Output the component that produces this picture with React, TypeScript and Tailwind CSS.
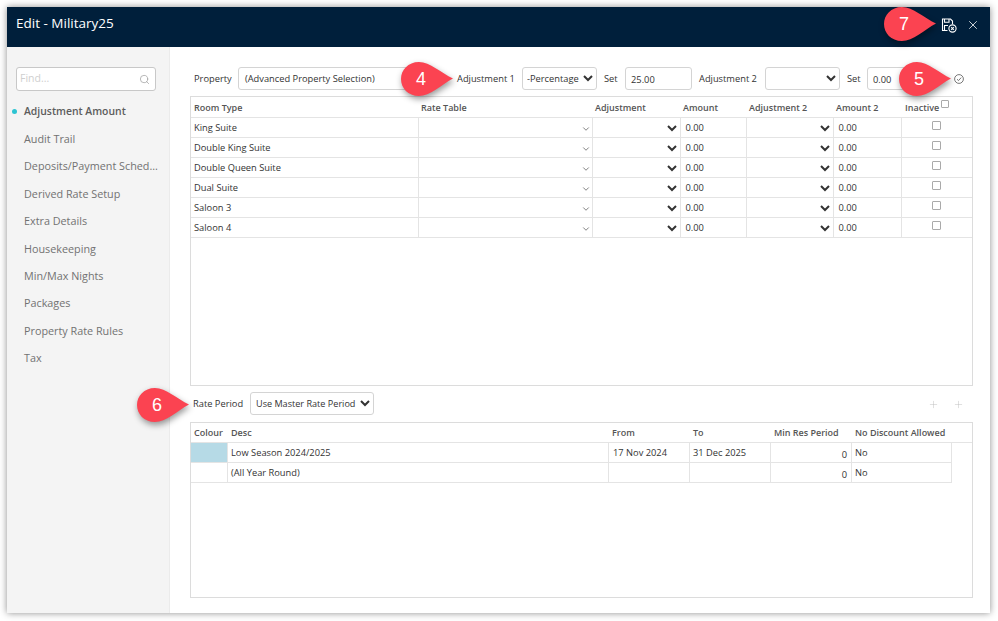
import { ChevronDown, Plus, Search, X } from "lucide-react";

const navItems = [
  "Audit Trail",
  "Deposits/Payment Sched...",
  "Derived Rate Setup",
  "Extra Details",
  "Housekeeping",
  "Min/Max Nights",
  "Packages",
  "Property Rate Rules",
  "Tax",
];

const rooms = ["King Suite", "Double King Suite", "Double Queen Suite", "Dual Suite", "Saloon 3", "Saloon 4"];

const controlClass =
  "h-[23px] rounded-[3px] border border-[#d4d4d4] bg-white text-[9.3px] text-[#333]";

const Callout = ({ n, className }: { n: number; className: string }) => (
  <div className={`absolute h-[34px] w-[52px] ${className}`}>
    <svg width="52" height="34" viewBox="0 0 52 34" className="absolute left-0 top-0 drop-shadow-[1px_3px_3px_rgba(0,0,0,0.4)]">
      <path d="M18 0C29 0 40 11 52 16.5C40 23 29 34 18 34C7 34 0 26 0 17C0 8 7 0 18 0Z" fill="#fb4351" />
    </svg>
    <span className="absolute left-[6px] top-0 w-[28px] text-center font-['Liberation_Sans',sans-serif] text-[18px] leading-[34px] text-white">
      {n}
    </span>
  </div>
);

const SaveIcon = () => (
  <svg width="16" height="15" viewBox="0 0 16 15" fill="none" stroke="#fff" strokeWidth="1.1">
    <path d="M6.5 12.5H1.5V1H9.5L11.5 3V6" />
    <path d="M3.5 1V4.2H8V1" />
    <path d="M3.5 12V7.5H7" />
    <circle cx="11.5" cy="10.5" r="3.6" />
    <path d="M10.2 9.2L12.8 11.8M12.8 9.2L10.2 11.8" />
  </svg>
);

const CheckCircle = () => (
  <svg width="10" height="10" viewBox="0 0 10 10" fill="none" stroke="#555" strokeWidth="0.8">
    <circle cx="5" cy="5" r="4.4" />
    <path d="M3 5.2L4.5 6.6L7.2 3.6" />
  </svg>
);

export default function App() {
  return (
    <div className="relative h-[621px] w-[998px] overflow-hidden bg-white pl-[7px] pt-[7px] font-['Open_Sans',sans-serif]">
      <div className="flex h-[606px] w-[983px] flex-col bg-white shadow-[0_0_7px_rgba(0,0,0,0.45)]">
        {/* Header */}
        <div className="flex h-[40px] shrink-0 items-center bg-[#001f3b] pl-[9px] pr-[10px] text-white">
          <span className="pb-[8px] text-[13.5px]">Edit - Military25</span>
          <div className="ml-auto flex items-center gap-[9px] pb-[4px]">
            <SaveIcon />
            <X size={14} strokeWidth={1.5} className="text-[#e6e9ec]" />
          </div>
        </div>

        <div className="flex min-h-0 flex-1">
          {/* Sidebar */}
          <div className="w-[163px] shrink-0 border-r border-[#ebebeb] bg-[#f4f4f4] pl-[9px] pt-[20px]">
            <div className="flex h-[24px] w-[140px] items-center rounded-[3px] border border-[#c8c8c8] bg-white pl-[3px] pr-[5px]">
              <span className="text-[10.5px] text-[#cfcfcf]">Find...</span>
              <Search size={11} strokeWidth={1.5} className="ml-auto text-[#999]" />
            </div>
            <div className="mt-[7px]">
              <div className="relative flex h-[27.4px] items-center pl-[8px] text-[10.4px] font-semibold text-[#5c5c5c]">
                <span className="absolute left-[-4px] top-[11px] h-[5px] w-[5px] rounded-full bg-[#2cc4d2]" />
                Adjustment Amount
              </div>
              {navItems.map((item) => (
                <div key={item} className="flex h-[27.4px] items-center whitespace-nowrap pl-[8px] text-[10.8px] text-[#727272]">
                  {item}
                </div>
              ))}
            </div>
          </div>

          {/* Main */}
          <div className="flex min-w-0 flex-1 flex-col pl-[20px] pr-[17px] pt-[20px] text-[9.3px] text-[#333]">
            <div className="flex h-[23px] shrink-0 items-center pl-[4px]">
              <span className="w-[44px] pt-[1px]">Property</span>
              <div className={`${controlClass} flex w-[172px] items-center pl-[6px] pt-[1px]`}>(Advanced Property Selection)</div>
              <span className="ml-[47px] w-[65px] pt-[1px]">Adjustment 1</span>
              <select className={`${controlClass} w-[75px] pl-0`} defaultValue="-Percentage">
                <option>-Percentage</option>
              </select>
              <span className="ml-[7px] w-[21px] pt-[1px]">Set</span>
              <input className={`${controlClass} w-[67px] pl-[5px] pt-[1px] outline-none`} defaultValue="25.00" />
              <span className="ml-[7px] w-[66px] pt-[1px]">Adjustment 2</span>
              <select className={`${controlClass} w-[75px]`} defaultValue="">
                <option></option>
              </select>
              <span className="ml-[7px] w-[20px] pt-[1px]">Set</span>
              <input className={`${controlClass} w-[42px] pl-[5px] pt-[1px] outline-none`} defaultValue="0.00" />
              <div className="ml-auto mr-[9px] flex">
                <CheckCircle />
              </div>
            </div>

            {/* Room table */}
            <div className="mt-[6px] h-[290px] shrink-0 border border-[#dcdcdc]">
              <table className="w-full table-fixed border-collapse">
                <colgroup>
                  <col className="w-[227px]" />
                  <col className="w-[174px]" />
                  <col className="w-[88px]" />
                  <col className="w-[66px]" />
                  <col className="w-[87px]" />
                  <col className="w-[68px]" />
                  <col />
                </colgroup>
                <thead>
                  <tr className="h-[20px] border-b border-[#e4e4e4] text-left text-[9px] text-[#555]">
                    <th className="pl-[3px] pt-[1px] font-semibold">Room Type</th>
                    <th className="pl-[3px] pt-[1px] font-semibold">Rate Table</th>
                    <th className="pl-[3px] pt-[1px] font-semibold">Adjustment</th>
                    <th className="pl-[3px] pt-[1px] font-semibold">Amount</th>
                    <th className="pl-[3px] pt-[1px] font-semibold">Adjustment 2</th>
                    <th className="pl-[3px] pt-[1px] font-semibold">Amount 2</th>
                    <th className="pl-[4px] pt-[1px] font-semibold">
                      <span className="flex items-start">
                        Inactive
                        <input type="checkbox" className="ml-[2px] mt-[-1px] h-[8px] w-[8px] appearance-none rounded-[1px] border border-[#aaa]" />
                      </span>
                    </th>
                  </tr>
                </thead>
                <tbody>
                  {rooms.map((room) => (
                    <tr key={room} className="h-[20px] border-b border-[#e4e4e4]">
                      <td className="border-r border-[#e4e4e4] pl-[3px] pt-[1px] text-[#333]">{room}</td>
                      <td className="border-r border-[#e4e4e4] pr-[1px]">
                        <ChevronDown size={10} strokeWidth={1.6} className="ml-auto mt-[4px] text-[#444]" />
                      </td>
                      <td className="border-r border-[#e4e4e4] p-0">
                        <select className="mt-[1px] block h-[18px] w-full bg-transparent" defaultValue="">
                          <option></option>
                        </select>
                      </td>
                      <td className="border-r border-[#e4e4e4] pl-[5px] pt-[2px]">0.00</td>
                      <td className="border-r border-[#e4e4e4] p-0">
                        <select className="mt-[1px] block h-[18px] w-full bg-transparent" defaultValue="">
                          <option></option>
                        </select>
                      </td>
                      <td className="border-r border-[#e4e4e4] pl-[5px] pt-[2px]">0.00</td>
                      <td className="p-0">
                        <div className="flex justify-center pb-[4px] pr-[1px]">
                          <input type="checkbox" className="h-[9px] w-[9px] appearance-none rounded-[1px] border border-[#aaa]" />
                        </div>
                      </td>
                    </tr>
                  ))}
                </tbody>
              </table>
            </div>

            {/* Rate period */}
            <div className="flex h-[36px] shrink-0 items-center pb-[2px] pl-[3px]">
              <span className="w-[57px] pt-[2px]">Rate Period</span>
              <select className="h-[23px] w-[124px] rounded-[3px] border border-[#d4d4d4] bg-white pl-[1px] text-[9.1px] text-[#333]" defaultValue="Use Master Rate Period">
                <option>Use Master Rate Period</option>
              </select>
              <div className="ml-auto mr-[9px] flex gap-[14px] pt-[2px] text-[#bbb]">
                <Plus size={11} strokeWidth={1} />
                <Plus size={11} strokeWidth={1} />
              </div>
            </div>

            <div className="h-[176px] shrink-0 border border-[#dcdcdc]">
              <div className="grid h-[20px] grid-cols-[37px_381px_81px_81px_81px_1fr] items-center border-b border-[#e4e4e4] pt-[1px] text-[9px] font-semibold text-[#555]">
                <span className="pl-[3px]">Colour</span>
                <span className="pl-[3px]">Desc</span>
                <span className="pl-[3px]">From</span>
                <span className="pl-[3px]">To</span>
                <span className="pl-[3px]">Min Res Period</span>
                <span className="pl-[3px]">No Discount Allowed</span>
              </div>
              <div className="grid w-[761px] grid-cols-[37px_381px_81px_81px_81px_100px]">
                <div className="h-[20px] border-b border-r border-[#e4e4e4] bg-[#b6dae6]" />
                <div className="flex h-[20px] items-center border-b border-r border-[#e4e4e4] pl-[3px] pt-[1px]">Low Season 2024/2025</div>
                <div className="flex h-[20px] items-center border-b border-r border-[#e4e4e4] pl-[4px] pt-[1px]">17 Nov 2024</div>
                <div className="flex h-[20px] items-center border-b border-r border-[#e4e4e4] pl-[3px] pt-[1px]">31 Dec 2025</div>
                <div className="flex h-[20px] items-center justify-end border-b border-r border-[#e4e4e4] pr-[4px] pt-[4px]">0</div>
                <div className="flex h-[20px] items-center border-b border-r border-[#e4e4e4] pl-[3px] pt-[1px]">No</div>
                <div className="h-[20px] border-b border-r border-[#e4e4e4]" />
                <div className="flex h-[20px] items-center border-b border-r border-[#e4e4e4] pl-[3px] pt-[1px]">(All Year Round)</div>
                <div className="h-[20px] border-b border-r border-[#e4e4e4]" />
                <div className="h-[20px] border-b border-r border-[#e4e4e4]" />
                <div className="flex h-[20px] items-center justify-end border-b border-r border-[#e4e4e4] pr-[4px] pt-[4px]">0</div>
                <div className="flex h-[20px] items-center border-b border-r border-[#e4e4e4] pl-[3px] pt-[1px]">No</div>
              </div>
            </div>
          </div>
        </div>
      </div>

      <Callout n={4} className="left-[401px] top-[62px]" />
      <Callout n={5} className="left-[899px] top-[62px]" />
      <Callout n={6} className="left-[137px] top-[388px]" />
      <Callout n={7} className="left-[884px] top-[7px]" />
    </div>
  );
}
